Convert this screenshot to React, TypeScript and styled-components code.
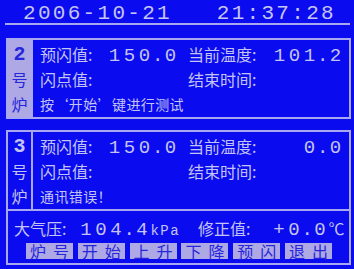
import React from "react";
import styled, { createGlobalStyle } from "styled-components";

const BLUE = "#0b0bef";
const INK = "#c4c4f4";
const LINE = "#a8a8f2";
const PAD = "#aea8e4";
const DARK = "#2626dc";

const Global = createGlobalStyle`
  html, body {
    margin: 0;
    padding: 0;
    background: ${BLUE};
  }
  * { box-sizing: border-box; }
`;

const Screen = styled.div`
  width: 354px;
  height: 269px;
  overflow: hidden;
  background: ${BLUE};
  color: ${INK};
  font-family: "Noto Sans CJK SC", sans-serif;
  font-size: 16px;
`;

const Clock = styled.div`
  margin: 0 4px 0 5px;
  padding: 4px 0 0 18px;
  height: 25px;
  line-height: 19px;
  border-bottom: 2px solid ${LINE};
  font-family: "Liberation Mono", monospace;
  font-size: 21px;
  letter-spacing: 2.3px;
  white-space: pre;
`;

const Panel = styled.div<{ $top: number }>`
  display: flex;
  width: 345px;
  margin: ${(p) => p.$top}px 0 0 6px;
  border: 2px solid ${LINE};
`;

const Cell = styled.div<{ $active?: boolean }>`
  width: 25px;
  flex: none;
  display: flex;
  flex-direction: column;
  align-items: center;
  padding-top: 2px;
  border-right: 2px solid ${LINE};
  background: ${(p) => (p.$active ? PAD : "transparent")};
  color: ${(p) => (p.$active ? DARK : INK)};
`;

const CellLine = styled.div<{ $digit?: boolean }>`
  height: 25px;
  line-height: 25px;
  font-family: ${(p) =>
    p.$digit ? '"Liberation Mono", monospace' : '"Noto Sans CJK SC", sans-serif'};
  font-size: ${(p) => (p.$digit ? "20px" : "16px")};
  font-weight: ${(p) => (p.$digit ? 700 : 400)};
`;

const Body = styled.div`
  flex: 1;
  display: grid;
  grid-template-columns: 138px 1fr;
  grid-auto-rows: 25px;
  column-gap: 10px;
  padding: 2px 6px 0 7px;
`;

const Field = styled.div`
  display: flex;
  align-items: baseline;
  justify-content: space-between;
  line-height: 25px;
  white-space: nowrap;
`;

const Value = styled.span<{ $gap?: number }>`
  display: inline-flex;
  font-family: "Liberation Mono", monospace;
  font-size: 19px;
  line-height: 19px;
  margin-left: ${(p) => p.$gap ?? 0}px;
`;

// each LCD character sits in its own cell; the decimal point's cell is narrower
const Glyph = styled.span<{ $narrow?: boolean }>`
  display: inline-block;
  width: ${(p) => (p.$narrow ? 11 : 15)}px;
  text-align: center;
`;

const Message = styled.div`
  grid-column: 1 / -1;
  line-height: 25px;
  font-size: 14px;
  letter-spacing: 0.4px;
`;

const Footer = styled.div`
  width: 345px;
  margin-left: 6px;
  padding: 7px 0 4px 0;
  border: 2px solid ${LINE};
  border-top: none;
`;

const Readings = styled.div`
  display: grid;
  grid-template-columns: 184px 1fr;
  padding-left: 6px;
  height: 25px;
  line-height: 20px;
`;

const Reading = styled.div`
  display: flex;
  align-items: baseline;
  white-space: nowrap;
`;

const Unit = styled.span<{ $mono?: boolean }>`
  margin-left: 1px;
  font-family: ${(p) =>
    p.$mono ? '"Liberation Mono", monospace' : '"Noto Sans CJK SC", sans-serif'};
  font-size: ${(p) => (p.$mono ? "14px" : "16px")};
  letter-spacing: ${(p) => (p.$mono ? "1.5px" : "0")};
`;

const Keys = styled.div`
  display: flex;
  gap: 4.8px;
  padding-left: 18px;
`;

const Key = styled.div`
  width: 47px;
  height: 16px;
  flex: none;
  display: flex;
  justify-content: center;
  gap: 7px;
  line-height: 16px;
  background: ${PAD};
  color: ${DARK};
  font-size: 16px;
`;

function Num({ text, gap }: { text: string; gap?: number }) {
  return (
    <Value $gap={gap}>
      {text.split("").map((ch, i) => (
        <Glyph key={i} $narrow={ch === "."}>
          {ch}
        </Glyph>
      ))}
    </Value>
  );
}

type Furnace = {
  no: string;
  active?: boolean;
  preset: string;
  temp: string;
  note: string;
};

const furnaces: Furnace[] = [
  { no: "2", active: true, preset: "150.0", temp: "101.2", note: "按‘开始’键进行测试" },
  { no: "3", preset: "150.0", temp: "0.0", note: "通讯错误！" },
];

const keys = ["炉号", "开始", "上升", "下降", "预闪", "退出"];

export default function App() {
  return (
    <Screen>
      <Global />
      <Clock>{"2006-10-21   21:37:28"}</Clock>
      {furnaces.map((f, i) => (
        <Panel key={f.no} $top={i === 0 ? 13 : 11}>
          <Cell $active={f.active}>
            <CellLine $digit>{f.no}</CellLine>
            <CellLine>号</CellLine>
            <CellLine>炉</CellLine>
          </Cell>
          <Body>
            <Field>
              <span>预闪值:</span>
              <Num text={f.preset} />
            </Field>
            <Field>
              <span>当前温度:</span>
              <Num text={f.temp} />
            </Field>
            <Field>
              <span>闪点值:</span>
            </Field>
            <Field>
              <span>结束时间:</span>
            </Field>
            <Message>{f.note}</Message>
          </Body>
        </Panel>
      ))}
      <Footer>
        <Readings>
          <Reading>
            <span>大气压:</span>
            <Num text="104.4" gap={12} />
            <Unit $mono>kPa</Unit>
          </Reading>
          <Reading>
            <span>修正值:</span>
            <Num text="+0.0" gap={21} />
            <Unit>℃</Unit>
          </Reading>
        </Readings>
        <Keys>
          {keys.map((k) => (
            <Key key={k}>
              {k.split("").map((ch) => (
                <span key={ch}>{ch}</span>
              ))}
            </Key>
          ))}
        </Keys>
      </Footer>
    </Screen>
  );
}
